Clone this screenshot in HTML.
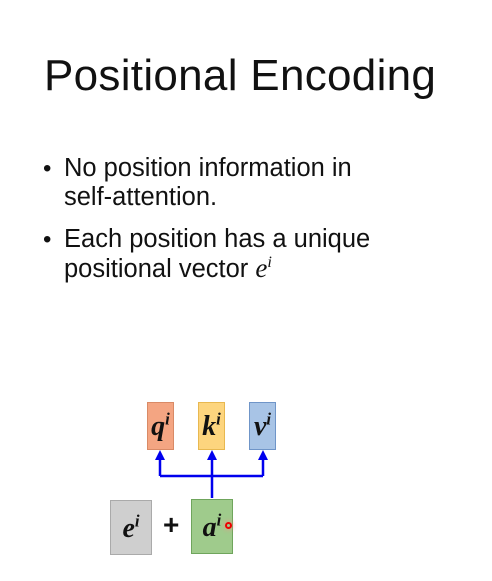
<!DOCTYPE html><html><head><style>
body{margin:0;width:492px;height:581px;background:#fff;position:relative;overflow:hidden;font-family:"Liberation Sans",sans-serif;color:#111}
.t{position:absolute;left:44px;top:51px;font-size:44px;letter-spacing:0.3px;white-space:nowrap;font-weight:300}
.b{position:absolute;left:64px;font-size:25.5px;line-height:29px;white-space:nowrap}
.d{position:absolute;left:43px;font-size:24px;line-height:29px}
.bx{position:absolute;font-family:"Liberation Serif",serif;font-style:italic;font-weight:bold;text-align:center;font-size:28px;box-sizing:border-box;border:1px solid}
sup{font-size:60%;line-height:0}
</style></head><body>
<div class="t">Positional Encoding</div>
<div class="d" style="top:154px">•</div>
<div class="b" style="top:154px">No position information in<br>self-attention.</div>
<div class="d" style="top:225px">•</div>
<div class="b" style="top:225px">Each position has a unique<br>positional vector <i style="font-family:'Liberation Serif',serif;font-size:27px">e<sup>i</sup></i></div>
<svg style="position:absolute;left:0;top:0" width="492" height="581">
<g stroke="#0000ee" stroke-width="2.5" fill="none"><path d="M160 476H263M212 498V458M160 476V458M263 476V458"/></g>
<g fill="#0000ee"><path d="M155 460L160 450L165 460Z"/><path d="M207 460L212 450L217 460Z"/><path d="M258 460L263 450L268 460Z"/></g>
</svg>
<div class="bx" style="left:147px;top:402px;width:27px;height:48px;background:#f4a582;border-color:#d98a66;line-height:48px">q<sup>i</sup></div>
<div class="bx" style="left:198px;top:402px;width:27px;height:48px;background:#fdd57e;border-color:#e8b850;line-height:48px">k<sup>i</sup></div>
<div class="bx" style="left:249px;top:402px;width:27px;height:48px;background:#a8c4e6;border-color:#6f95c8;line-height:48px">v<sup>i</sup></div>
<div class="bx" style="left:110px;top:500px;width:42px;height:55px;background:#cfcfcf;border-color:#aaa;line-height:55px">e<sup>i</sup></div>
<div style="position:absolute;left:163px;top:509px;font-size:28px;font-weight:bold">+</div>
<div class="bx" style="left:191px;top:499px;width:42px;height:55px;background:#9fcb8c;border-color:#6fa55c;line-height:55px">a<sup>i</sup></div>
<div style="position:absolute;left:225px;top:522px;width:7px;height:7px;border:2px solid #e00;border-radius:50%;box-sizing:border-box;box-shadow:0 0 6px #f88"></div>
</body></html>
